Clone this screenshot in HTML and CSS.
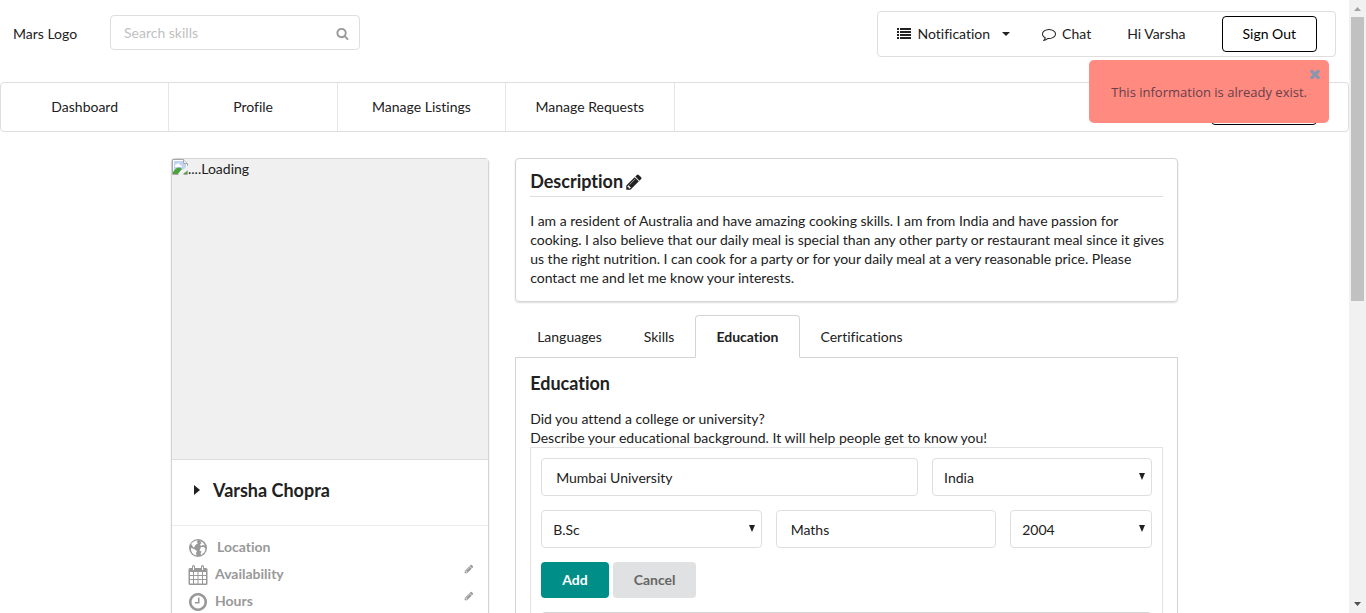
FILE: index.html
```html
<!DOCTYPE html>
<html lang="en">
<head>
<meta charset="utf-8">
<title>Profile</title>
<link rel="stylesheet" href="styles.css">
</head>
<body>
<svg class="sprite" aria-hidden="true">
  <symbol id="pencil" viewBox="0 0 1792 1792"><path d="M491 1536l91-91-235-235-91 91v107h128v128h107zm523-928q0-22-22-22-10 0-17 7l-542 542q-7 7-7 17 0 22 22 22 10 0 17-7l542-542q7-7 7-17zm-54-192l416 416-832 832h-416v-416zm683 96q0 53-37 90l-166 166-416-416 166-165q36-38 90-38 53 0 91 38l235 234q37 39 37 91z"/></symbol>
</svg>
<div class="page">
  <header class="topbar">
    <a class="logo" href="#">Mars Logo</a>
    <form class="search">
      <input type="text" placeholder="Search skills" aria-label="Search skills">
      <svg class="icon" viewBox="0 0 1792 1792"><path d="M1216 832q0-185-131.5-316.5t-316.5-131.5-316.5 131.5-131.5 316.5 131.5 316.5 316.5 131.5 316.5-131.5 131.5-316.5zm512 832q0 52-38 90t-90 38q-54 0-90-38l-343-342q-179 124-399 124-143 0-273.5-55.5t-225-150-150-225-55.5-273.5 55.5-273.5 150-225 225-150 273.5-55.5 273.5 55.5 225 150 150 225 55.5 273.5q0 220-124 399l343 343q37 37 37 90z"/></svg>
    </form>
    <div class="account">
      <a class="notification" href="#">
        <svg class="icon" viewBox="0 0 14 14"><path d="M0 1h2v2H0zM3 1h11v2H3zM0 4h2v2H0zM3 4h11v2H3zM0 7h2v2H0zM3 7h11v2H3zM0 10h2v2H0zM3 10h11v2H3z"/></svg>
        <span>Notification</span>
        <svg class="caret" viewBox="0 0 8 5"><path d="M0 0h8L4 4z"/></svg>
      </a>
      <a class="chat" href="#">
        <svg class="icon" viewBox="0 0 1792 1792"><path d="M896 384q-204 0-381.5 69.5t-282 187.5-104.5 255q0 112 71.5 213.5t201.5 175.5l87 50-27 96q-24 91-70 172 152-63 275-171l43-38 57 6q69 8 130 8 204 0 381.5-69.5t282-187.5 104.500-255-104.500-255-282-187.500-381.500-69.500zm896 512q0 174-120 321.500t-326 233-450 85.500q-70 0-145-8-198 175-460 242-49 14-114 22h-5q-15 0-27-10.500t-16-27.500v-1q-3-4-.5-12t2-10 4.500-9.500l6-9 7-8.500 8-9q7-8 31-34.500t34.500-38 31-39.500 32.500-51 27-59 26-76q-157-89-247.500-220t-90.500-281q0-130 71-248.500t191-204.500 286-136.500 348-50.500 348 50.500 286 136.500 191 204.500 71 248.500z"/></svg>
        <span>Chat</span>
      </a>
      <span class="greeting">Hi Varsha</span>
      <button class="outline" type="button">Sign Out</button>
    </div>
  </header>
  <nav class="menu">
    <a href="#">Dashboard</a>
    <a href="#">Profile</a>
    <a href="#">Manage Listings</a>
    <a href="#">Manage Requests</a>
    <button class="outline share" type="button" aria-label="Share Skill"></button>
  </nav>
  <main class="content">
    <aside class="card profile">
      <div class="photo">
        <svg class="broken" viewBox="0 0 16 16"><path d="M.5.5h11l4 4v11H.5z" fill="#fff" stroke="#a8a8a8"/><path d="M2 2h9v3h3v5L2 13z" fill="#c0d4f2"/><path d="M3 7q0-2 2-2 2-2 3 1 2 0 2 2H3z" fill="#fff"/><path d="M1 15v-2q5-7 9-3l-4 5z" fill="#4ba43b"/><path d="M11.500.5v4h4" fill="#eee" stroke="#a8a8a8"/><path d="M6 16l9-9h1v4l-5 5z" fill="#f0f0f0"/><path d="M11 15l4-3v3z" fill="#4ba43b"/></svg><span>....Loading</span>
      </div>
      <div class="name">
        <svg class="arrow" viewBox="0 0 6 12"><path d="M0 0l6 5-6 5z"/></svg>
        <h2>Varsha Chopra</h2>
      </div>
      <ul class="facts">
        <li class="wide">
          <svg class="fact-icon" viewBox="0 0 20 20"><circle cx="10" cy="10" r="9"/><path fill="#fff" d="M3 6Q6 2 10 2.500L8.500 4 10 5 7.500 7 6 9.500 5 9 4 7zM3 10l3 1 3 2-1 2 .5 2.500Q4 16.500 3 12zM12 3l3 1.500 2 3-2-.5-2 1-1-1.500L13.500 5zM13 9l3 0 1.500 2-1 3-3 3-1-1 1-2.500-2-1z"/></svg>
          <span>Location</span>
        </li>
        <li>
          <svg class="fact-icon" viewBox="0 0 20 20"><path fill-rule="evenodd" d="M2 3h2V1.500Q4 0 5.500 0T7 1.500V3h6V1.500Q13 0 14.500 0T16 1.500V3h2q1.500 0 1.500 1.500v14Q19.500 20 18 20H2Q.5 20 .5 18.500v-14Q.5 3 2 3zM5 1.500V5h1V1.500zM14 1.500V5h1V1.500zM2 7v3h3V7zM6 7v3h3.500V7zM10.500 7v3H14V7zM15 7v3h3V7zM2 11v3h3v-3zM6 11v3h3.500v-3zM10.500 11v3H14v-3zM15 11v3h3v-3zM2 15v3.500h3V15zM6 15v3.500h3.500V15zM10.500 15v3.500H14V15zM15 15v3.500h3V15z"/></svg>
          <span>Availability</span>
          <button type="button" aria-label="Edit availability"><svg class="pen"><use href="#pencil"/></svg></button>
        </li>
        <li>
          <svg class="fact-icon" viewBox="48 48 1696 1696"><path d="M1024 544v448q0 14-9 23t-23 9h-320q-14 0-23-9t-9-23v-64q0-14 9-23t23-9h224v-352q0-14 9-23t23-9h64q14 0 23 9t9 23zm416 352q0-148-73-273t-198-198-273-73-273 73-198 198-73 273 73 273 198 198 273 73 273-73 198-198 73-273zm224 0q0 209-103 385.500t-279.500 279.500-385.500 103-385.500-103-279.500-279.500-103-385.500 103-385.500 279.500-279.500 385.500-103 385.500 103 279.500 279.500 103 385.500z"/></svg>
          <span>Hours</span>
          <button type="button" aria-label="Edit hours"><svg class="pen"><use href="#pencil"/></svg></button>
        </li>
      </ul>
    </aside>
    <div class="details">
      <section class="card description">
        <h2>Description<svg class="edit"><use href="#pencil"/></svg></h2>
        <p>I am a resident of Australia and have amazing cooking skills. I am from India and have passion for cooking. I also believe that our daily meal is special than any other party or restaurant meal since it gives us the right nutrition. I can cook for a party or for your daily meal at a very reasonable price. Please contact me and let me know your interests.</p>
      </section>
      <div class="tabs">
        <a href="#">Languages</a>
        <a href="#">Skills</a>
        <a class="active" href="#">Education</a>
        <a href="#">Certifications</a>
      </div>
      <section class="panel">
        <h2>Education</h2>
        <p>Did you attend a college or university?<br>Describe your educational background. It will help people get to know you!</p>
        <form class="education">
          <div class="row first">
            <input type="text" value="Mumbai University" aria-label="University">
            <div class="select"><select aria-label="Country"><option>India</option></select><svg viewBox="0 0 6 7"><path d="M0 0h6L3 7z"/></svg></div>
          </div>
          <div class="row second">
            <div class="select"><select aria-label="Title"><option>B.Sc</option></select><svg viewBox="0 0 6 7"><path d="M0 0h6L3 7z"/></svg></div>
            <input type="text" value="Maths" aria-label="Degree">
            <div class="select"><select aria-label="Year of graduation"><option>2004</option></select><svg viewBox="0 0 6 7"><path d="M0 0h6L3 7z"/></svg></div>
          </div>
          <div class="actions">
            <button class="add" type="button">Add</button>
            <button class="cancel" type="button">Cancel</button>
          </div>
          <div class="records"></div>
        </form>
      </section>
    </div>
  </main>
  <div class="toast" role="alert">
    <span>This information is already exist.</span>
    <button type="button" aria-label="Close"><svg viewBox="302 302 1188 1188"><path d="M1490 1322q0 40-28 68l-136 136q-28 28-68 28t-68-28l-294-294-294 294q-28 28-68 28t-68-28l-136-136q-28-28-28-68t28-68l294-294-294-294q-28-28-28-68t28-68l136-136q28-28 68-28t68 28l294 294 294-294q28-28 68-28t68 28l136 136q28 28 28 68t-28 68l-294 294 294 294q28 28 28 68z"/></svg></button>
  </div>
</div>
<div class="scrollbar" aria-hidden="true">
  <svg class="up" viewBox="0 0 7 4"><path d="M0 4h7L3.500 0z"/></svg>
  <div class="track"><div class="thumb"></div></div>
  <svg viewBox="0 0 7 4"><path d="M0 0h7L3.500 4z"/></svg>
</div>
</body>
</html>
```

FILE: styles.css
```css
* { box-sizing: border-box; }
body {
  margin: 0;
  height: 100vh;
  display: flex;
  overflow: hidden;
  background: #fff;
  color: #212121;
  font: 14px/19px Lato, "Liberation Sans", sans-serif;
  font-variant-ligatures: none;
}
a { color: inherit; text-decoration: none; }
svg { fill: currentColor; flex: none; }
button, input, select { font: inherit; color: inherit; }
button { padding: 0; border: 0; background: none; }
h2 { margin: 0; font-size: 18px; line-height: 23px; font-weight: 700; }
p { margin: 0; }
.sprite { position: absolute; width: 0; height: 0; }
.icon { width: 14px; height: 14px; }

.page { position: relative; flex: 1; min-width: 0; overflow: hidden; }

.topbar { display: flex; align-items: center; padding: 11px 13px 0; }
.logo { width: 97px; padding-bottom: 2px; }
.search {
  display: flex;
  align-items: center;
  width: 250px;
  height: 35px;
  margin-bottom: 4px;
  padding: 0 10px 0 13px;
  border: 1px solid #dededf;
  border-radius: 4px;
}
.search input { flex: 1; min-width: 0; padding: 0; border: 0; outline: 0; background: none; }
.search input::placeholder { color: #bfbfbf; }
.search svg { color: #999; width: 13px; height: 13px; margin-top: 3px; }
.account {
  display: flex;
  align-items: center;
  height: 46px;
  margin-left: auto;
  padding: 0 18px 0 19px;
  border: 1px solid #dededf;
  border-radius: 4px;
}
.account span { padding-bottom: 2px; }
.notification, .chat { display: flex; align-items: center; gap: 6px; }
.caret { width: 8px; height: 5px; margin-left: 6px; }
.chat { margin: 0 36px 0 32px; }
.greeting { margin-right: 36px; }
.outline {
  height: 36px;
  padding: 0 20px 2px;
  border: 1px solid #000;
  border-radius: 4px;
  background: #fff;
  color: #000;
}

.menu {
  display: flex;
  align-items: center;
  height: 50px;
  margin-top: 25px;
  border: 1px solid #dededf;
  border-radius: 4px;
}
.menu a {
  display: flex;
  align-items: center;
  justify-content: center;
  width: 12.5%;
  height: 100%;
  padding-bottom: 2px;
  border-right: 1px solid #e6e6e6;
}
.share { width: 106px; margin: 0 31px 0 auto; }

.content {
  display: grid;
  grid-template-columns: 12fr 25fr;
  gap: 26px;
  max-width: 1007px;
  margin: 26px auto 0;
}
.card { border: 1px solid #d4d4d5; border-radius: 4px; box-shadow: 0 1px 2px #ddd; }
.photo {
  display: flex;
  align-items: flex-start;
  height: 300px;
  background: #f0f0f0;
}
.broken { width: 16px; height: 16px; }
.name {
  display: flex;
  align-items: center;
  gap: 13px;
  height: 66px;
  padding: 0 22px 4px;
  border-top: 1px solid #dcdcdc;
}
.arrow { width: 6px; height: 12px; }
.facts {
  margin: 0;
  padding: 8px 14px 16px 16px;
  border-top: 1px solid #ececec;
  list-style: none;
  color: #999;
  font-weight: 700;
}
.facts li { display: flex; align-items: center; gap: 7px; height: 27px; }
.facts .wide { gap: 9px; }
.facts span { padding-bottom: 3px; }
.facts button { margin: 0 0 12px auto; line-height: 0; }
.fact-icon { width: 20px; height: 20px; }
.pen { width: 10px; height: 10px; }

.description { padding: 11px 14px 14px; }
.description h2 { display: flex; align-items: center; padding-bottom: 3px; border-bottom: 1px solid #dededf; }
.edit { width: 18px; height: 18px; margin-left: 2px; }
.description p { margin-right: -10px; padding-top: 14px; }

.tabs { display: flex; margin-top: 13px; }
.tabs a {
  height: 43px;
  padding: 11px 20px;
  margin-bottom: -1px;
  border: 1px solid transparent;
}
.tabs a:first-child { margin-left: 1px; }
.tabs .active {
  z-index: 1;
  border-color: #d4d4d5 #d4d4d5 #fff;
  border-radius: 4px 4px 0 0;
  background: #fff;
  font-weight: 700;
}
.panel { padding: 14px; border: 1px solid #d4d4d5; }
.panel p { padding-top: 14px; }
.education { padding: 10px; border: 1px solid #e2e2e3; }
.row { display: grid; gap: 14px; margin-bottom: 14px; }
.first { grid-template-columns: 12fr 7fr; }
.second { grid-template-columns: 14fr 14fr 9fr; }
.row input, .row select {
  width: 100%;
  height: 38px;
  border: 1px solid #dededf;
  border-radius: 4px;
  background: #fff;
  outline: 0;
}
.row input { padding: 0 14px; }
.row select { appearance: none; padding: 0 11px; }
.select { position: relative; }
.select svg { position: absolute; right: 7px; top: 15px; width: 6px; height: 7px; pointer-events: none; }
.actions { display: flex; gap: 4px; }
.actions button { height: 36px; padding: 0 21px 2px; border-radius: 4px; font-weight: 700; }
.actions .add { background: #008f88; color: #fff; }
.actions .cancel { background: #e0e1e2; color: #666; }
.records { height: 60px; margin-top: 14px; border: 1px solid #d4d4d5; border-radius: 4px; }

.toast {
  position: absolute;
  top: 60px;
  right: 20px;
  padding: 23px 22px 21px;
  border-radius: 5px;
  background: #ff8a80;
  color: #66404a;
  font-family: "Open Sans", sans-serif;
  font-size: 13px;
}
.toast button { position: absolute; top: 9px; right: 9px; color: #8896b0; line-height: 0; }
.toast button svg { width: 10px; height: 10px; }

.scrollbar {
  display: flex;
  flex-direction: column;
  align-items: center;
  justify-content: space-between;
  width: 17px;
  padding: 7px 0;
  background: #f1f1f1;
  color: #505050;
}
.scrollbar > svg { width: 7px; height: 4px; }
.scrollbar .up { color: #a3a3a3; }
.track { flex: 1; width: 13px; padding: 6px 0; }
.thumb { height: 49%; background: #c1c1c1; }
```
